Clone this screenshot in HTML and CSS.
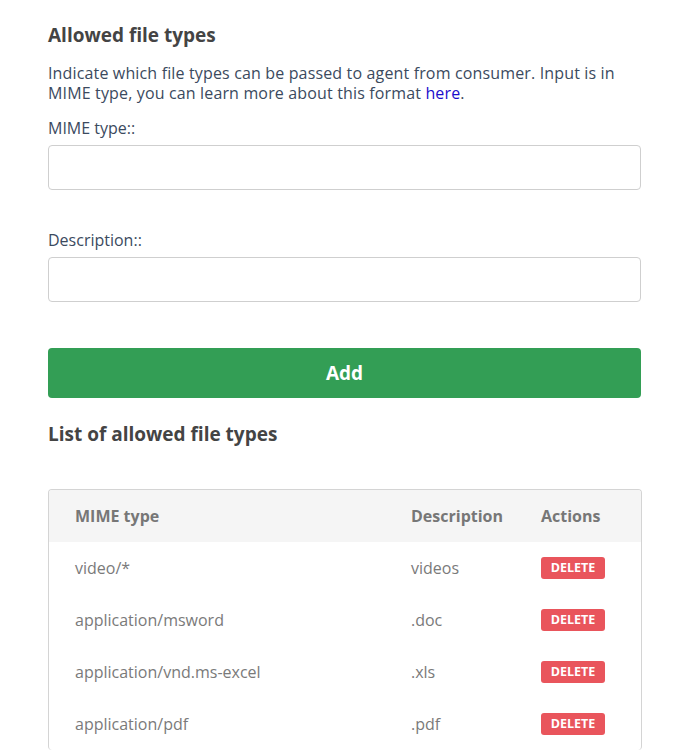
FILE: index.html
```html
<!DOCTYPE html>
<html>
<head>
<meta charset="utf-8">
<link rel="stylesheet" href="styles.css">
</head>
<body>
<div class="page">
  <h2 class="title">Allowed file types</h2>
  <p class="intro">Indicate which file types can be passed to agent from consumer. Input is in MIME type, you can learn more about this format <a href="#">here</a>.</p>
  <div class="field">
    <label class="label">MIME type::</label>
    <input class="input" type="text">
  </div>
  <div class="field">
    <label class="label">Description::</label>
    <input class="input" type="text">
  </div>
  <button class="add">Add</button>
  <h2 class="title list-title">List of allowed file types</h2>
  <div class="table-wrap">
    <table class="table">
      <thead>
        <tr><th class="c-mime">MIME type</th><th class="c-desc">Description</th><th class="c-act">Actions</th></tr>
      </thead>
      <tbody>
        <tr><td>video/*</td><td>videos</td><td><button class="del">DELETE</button></td></tr>
        <tr><td>application/msword</td><td>.doc</td><td><button class="del">DELETE</button></td></tr>
        <tr><td>application/vnd.ms-excel</td><td>.xls</td><td><button class="del">DELETE</button></td></tr>
        <tr><td>application/pdf</td><td>.pdf</td><td><button class="del">DELETE</button></td></tr>
      </tbody>
    </table>
  </div>
</div>
</body>
</html>
```
FILE: styles.css
```css
* { box-sizing: border-box; }
html, body { margin: 0; padding: 0; background: #fff; }
body { font-family: "Open Sans", "Noto Sans", sans-serif; color: #3d4a5c; }
.page { padding: 22px 44px 0 48px; width: 685px; }
.title { margin: 0; font-size: 19px; font-weight: 700; color: #444; line-height: 26px; }
.intro { margin: 15px 0 0; font-size: 16px; line-height: 20px; color: #3b4a5e; letter-spacing: 0.15px; }
.intro a { color: #1a0dcc; text-decoration: none; }
.field { margin-top: 15px; }
.field + .field { margin-top: 40px; }
.label { display: block; font-size: 16px; line-height: 20px; color: #3b4a5e; margin-bottom: 7px; }
.input { display: block; width: 593px; height: 45px; border: 1px solid #cfcfcf; border-radius: 4px; background: #fff; outline: none; }
.add { display: block; margin-top: 46px; width: 593px; height: 50px; background: #339e55; color: #fff; border: none; border-radius: 4px; font-family: inherit; font-size: 19px; font-weight: 700; }
.list-title { margin-top: 23px; }
.table-wrap { margin-top: 42px; width: 594px; border: 1px solid #d4d4d4; border-radius: 4px; border-bottom: none; overflow: hidden; }
.table { width: 100%; border-collapse: collapse; }
.table th { background: #f5f5f5; height: 52px; text-align: left; font-size: 16px; font-weight: 700; color: #777; padding: 0; }
.table td { height: 52px; font-size: 16px; color: #7a7a7a; padding: 0; }
.table th:first-child, .table td:first-child { padding-left: 26px; }
.c-mime { width: 362px; }
.c-desc { width: 130px; }
.del { display: block; background: #e9555c; color: #fff; border: none; border-radius: 3px; font-family: inherit; font-size: 12.5px; font-weight: 700; height: 22px; padding: 0; width: 64px; line-height: 22px; text-align: center; }
```
